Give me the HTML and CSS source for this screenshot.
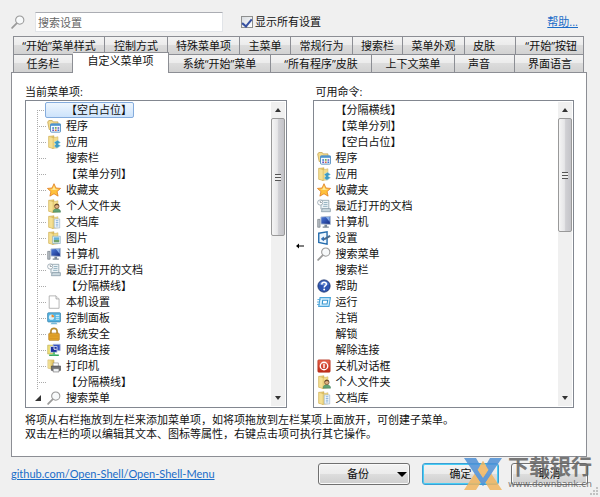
FILE: index.html
```html
<!DOCTYPE html>
<html lang="zh-CN">
<head>
<meta charset="utf-8">
<title>开始菜单设置</title>
<link rel="stylesheet" href="styles.css">
</head>
<body>
<svg class="sprite" aria-hidden="true">
  <defs>
    <linearGradient id="gold" x1="0" x2="1"><stop offset="0" stop-color="#f9eba6"/><stop offset="1" stop-color="#dcb850"/></linearGradient>
    <linearGradient id="red" x1="0" x2="0" y1="0" y2="1"><stop offset="0" stop-color="#e8664e"/><stop offset="1" stop-color="#c02a17"/></linearGradient>
    <linearGradient id="blue" x1="0" x2="1" y1="0" y2="1"><stop offset="0" stop-color="#4f7fe0"/><stop offset="1" stop-color="#12287f"/></linearGradient>
  </defs>
  <symbol id="folder" viewBox="0 0 16 16">
    <path d="M2 1.5 8 .8v14L2 14z" fill="url(#gold)" stroke="#cdb162" stroke-width=".6"/>
    <path d="M6 3.5 12.5 2v12.500L6 15.5z" fill="#f3dc88" stroke="#cdb162" stroke-width=".6"/>
    <path d="M2 1.5 7 3v12.500L2 14z" fill="#f5e093" stroke="#cfae58" stroke-width=".6"/>
  </symbol>
  <symbol id="programs" viewBox="0 0 16 16">
    <path d="M.8 3.5 2 1.8h4l1 1.5h5.5V12H2.5z" fill="#f5dd8e" stroke="#c2a252" stroke-width=".9"/>
    <rect x="4" y="5.5" width="11.5" height="9.5" rx="1" fill="#f6fbff" stroke="#4a86ba"/>
    <path d="M4 5.5h11.5v2.3H4z" fill="#4d94cf"/>
    <path d="M6 9.3h2v1.8H6zM12 12h2v1.8h-2z" fill="#3474cf"/><path d="M9 9.3h2v1.8H9z" fill="#58a646"/><path d="M12 9.3h2v1.8h-2zM6 12h2v1.8H6z" fill="#6655c2"/><path d="M9 12h2v1.8H9z" fill="#db6145"/>
  </symbol>
  <symbol id="apps" viewBox="0 0 16 16">
    <use href="#folder"/>
    <path d="M8 8.5 12 6l3.5 2.5-3 1.8 3 2-4.2 2.7L8 12.5l2.3-1.8z" fill="#3d9bc4" stroke="#bfe7f4" stroke-width=".5"/>
  </symbol>
  <symbol id="star" viewBox="0 0 16 16">
    <path d="M8 .8 10.2 5.7 15.5 6.2 11.5 9.8 12.7 15 8 12.3 3.3 15 4.5 9.8.5 6.2 5.8 5.7z" fill="#ffc13b" stroke="#df7b1e" stroke-width=".9" stroke-linejoin="round"/>
    <path d="M8 3 9.3 6.6 13 7 8 8 4 7 6.7 6.6z" fill="#ffe99a"/>
  </symbol>
  <symbol id="user" viewBox="0 0 16 16">
    <use href="#folder"/>
    <path d="M7 15c0-3 2-4 4-4s4.5 1 4.5 4z" fill="#62a376" stroke="#3d7b55" stroke-width=".6"/>
    <circle cx="11.2" cy="8.3" r="2.6" fill="#dfb182" stroke="#6b4b2c" stroke-width=".8"/>
    <path d="M8.7 8c0-3.5 5-3.5 5 0-1.5-1.5-3-1.5-5 0z" fill="#66482a"/>
  </symbol>
  <symbol id="docs" viewBox="0 0 16 16">
    <use href="#folder"/>
    <path d="M8.3 4.5h6.2v10.3H8.3z" fill="#f5faff" stroke="#8fabc4" stroke-width=".7"/>
    <path d="M10 6.5h3M10 8.5h3M10 10.5h3M10 12.5h3" stroke="#5e96cd" stroke-width=".8"/>
  </symbol>
  <symbol id="pics" viewBox="0 0 16 16">
    <use href="#folder"/>
    <path d="M6.5 6h8.7v8.3H6.5z" fill="#eff9ff" stroke="#7aa2b9" stroke-width=".7"/>
    <path d="M7.8 7.2h6.2v3H7.8z" fill="#62b0da"/><path d="M7.8 10.2h6.2V13H7.8z" fill="#70a36b"/>
  </symbol>
  <symbol id="computer" viewBox="0 0 16 16">
    <path d="M.8 5h2.7v9H.8z" fill="#b8bec5" stroke="#67717c" stroke-width=".7"/>
    <path d="M4.5 2.2 15.3 1.5v9.3l-10.8-.5z" fill="url(#blue)" stroke="#b4c1d3"/>
    <path d="M10 2.3h4.4v5.4z" fill="#85aeea"/>
    <path d="M8.5 11h3v2h2v1.5h-7V13h2z" fill="#7c8997"/>
  </symbol>
  <symbol id="recent" viewBox="0 0 16 16">
    <path d="M4.5 1.5h9v10h-9z" fill="#ecf3f7" stroke="#7d929f" stroke-width=".8"/>
    <path d="M6 11h9.3v3.5H5z" fill="#cad8df" stroke="#7d929f" stroke-width=".8"/>
    <path d="M8 4h4M7.5 6.2H12M7 8.4h5" stroke="#8aacba"/>
    <circle cx="3.7" cy="4" r="3" fill="#fff" stroke="#92a2ac" stroke-width=".9"/>
    <path d="M3.7 2v2h1.8" fill="none" stroke="#586975" stroke-width=".7"/>
  </symbol>
  <symbol id="page" viewBox="0 0 16 16">
    <path d="M2.5 1h7.8l3.5 3.5v10.7H2.5z" fill="#fff" stroke="#999" stroke-width=".8"/>
    <path d="M10.3 1v3.5h3.5" fill="#eee" stroke="#999" stroke-width=".8"/>
  </symbol>
  <symbol id="panel" viewBox="0 0 16 16">
    <rect x=".7" y="2" width="14.8" height="10.5" rx="1" fill="#55b4e1" stroke="#347da8" stroke-width=".8"/>
    <circle cx="5.2" cy="7" r="3" fill="#d8f0fa"/><path d="M5.2 7V4a3 3 0 0 1 3 3z" fill="#f08b30"/>
    <path d="M10 5h4M10 7.2h4M10 9.4h4" stroke="#e7fafe"/><path d="M5.5 13h5l1.5 2h-8z" fill="#77b9d8"/>
  </symbol>
  <symbol id="lock" viewBox="0 0 16 16">
    <path d="M4.5 8V4.5c0-4 7-4 7 0V8" fill="none" stroke="#b68a2d" stroke-width="1.9"/>
    <rect x="2" y="7" width="12" height="8.2" rx="1" fill="#e9aa2e" stroke="#ad7519" stroke-width=".8"/>
    <path d="M3 9.3h10M3 11.3h10M3 13.3h10" stroke="#c98a1c" stroke-width=".7"/>
  </symbol>
  <symbol id="network" viewBox="0 0 16 16">
    <path d="M.8 2.5h6v10h-6z" fill="#eee078" stroke="#b9aa4b" stroke-width=".7"/>
    <path d="M7 1.5h8v7.2H7z" fill="#3953c3" stroke="#a6b4d4"/><path d="M4 4h7.5v6.7H4z" fill="#1b2f9d" stroke="#cad5ea"/>
    <path d="M8 4.7v2.5h3" stroke="#fff" fill="none"/><path d="M8 10.5v2.3M2.5 14h11" stroke="#32a65a" stroke-width="1.8"/><path d="M5.5 14 8 11.5l2.5 2.5z" fill="#61c580"/>
  </symbol>
  <symbol id="printer" viewBox="0 0 16 16">
    <path d="M1 1h7v11L1 10.5z" fill="url(#gold)" stroke="#cdb162" stroke-width=".6"/>
    <path d="M7 4.5h6V9H7z" fill="#fff" stroke="#848484" stroke-width=".7"/>
    <path d="M5 8h10.5v5H5z" fill="#727274" stroke="#454548" stroke-width=".7"/>
    <path d="M7 11h6.7v3.8H7z" fill="#f3f5f7" stroke="#666" stroke-width=".7"/>
  </symbol>
  <symbol id="search" viewBox="0 0 16 16">
    <path d="M6.7 9.3 1.3 14.8" stroke="#9a9a9a" stroke-width="2" stroke-linecap="round"/>
    <circle cx="10" cy="5.8" r="4.7" fill="#f7f9fa" stroke="#999" stroke-width="1.2"/>
    <path d="M7.3 5.2c.4-1.5 1.4-2.2 2.7-2.3" stroke="#fff" fill="none"/>
  </symbol>
  <symbol id="settings" viewBox="0 0 16 16">
    <path d="M2 2.5 11.5 1v14L2 13z" fill="#edf7ff" stroke="#246cad" stroke-width="1.6"/>
    <path d="m5 9 2.500-2v4z" fill="#2466b1" stroke="#2466b1"/><path d="m8 9.500 7-4" stroke="#4b6b8c" stroke-width="2.200"/>
  </symbol>
  <symbol id="help" viewBox="0 0 16 16">
    <circle cx="8" cy="8" r="7" fill="#2d55b1" stroke="#1e3670"/>
    <path d="M2.5 6c1.5-4.5 9.5-4.5 11 0-3 1.7-8 1.7-11 0z" fill="#7398dd" opacity=".7"/>
    <path d="M5.5 6.2c0-3.5 5.2-3.2 5.2-.3 0 1.7-2.5 1.7-2.5 3.8" stroke="#fff" stroke-width="1.7" fill="none"/><circle cx="8.2" cy="12" r="1.1" fill="#fff"/>
  </symbol>
  <symbol id="run" viewBox="0 0 16 16">
    <path d="M3.5 3h11.8l-1.600 10H2z" fill="#d9f2ff" stroke="#4ca4d9" stroke-width="1.3"/>
    <path d="M6.5 6h5.7L11.5 10.3H6z" fill="#fff" stroke="#3695cf" stroke-width="1.2"/>
    <path d="M.5 5.2H4M0 8h3.5M0 10.8h3" stroke="#4ca4d9"/>
  </symbol>
  <symbol id="power" viewBox="0 0 16 16">
    <rect x="1" y="1" width="14" height="14" rx="1" fill="url(#red)" stroke="#b5311d" stroke-width=".8"/>
    <circle cx="8" cy="8" r="4.3" fill="none" stroke="#fff" stroke-width="1.5"/><path d="M8 5.5v5" stroke="#fff" stroke-width="1.6"/>
  </symbol>
</svg>

<div class="dialog">
  <header class="top">
    <svg class="icon search-icon" aria-hidden="true"><use href="#search"/></svg>
    <input class="search" type="text" placeholder="搜索设置" aria-label="搜索设置">
    <label class="show-all"><input type="checkbox" checked>显示所有设置</label>
    <a class="help" href="#">帮助...</a>
  </header>

  <div class="tabs" role="tablist">
    <div class="tab-row tab-row-back">
      <button class="tab" role="tab">“开始”菜单样式</button>
      <button class="tab" role="tab">控制方式</button>
      <button class="tab" role="tab">特殊菜单项</button>
      <button class="tab" role="tab">主菜单</button>
      <button class="tab" role="tab">常规行为</button>
      <button class="tab" role="tab">搜索栏</button>
      <button class="tab" role="tab">菜单外观</button>
      <button class="tab tab-start" role="tab">皮肤</button>
      <button class="tab tab-end" role="tab">“开始”按钮</button>
    </div>
    <div class="tab-row tab-row-front">
      <button class="tab" role="tab">任务栏</button>
      <button class="tab selected" role="tab" aria-selected="true">自定义菜单项</button>
      <button class="tab" role="tab">系统“开始”菜单</button>
      <button class="tab" role="tab">“所有程序”皮肤</button>
      <button class="tab" role="tab">上下文菜单</button>
      <button class="tab tab-start tab-wide" role="tab">声音</button>
      <button class="tab tab-end" role="tab">界面语言</button>
    </div>
  </div>

  <main class="panel">
    <div class="columns">
      <section class="column">
        <h2>当前菜单项:</h2>
        <div class="listbox">
          <ul class="items tree">
            <li><span class="icon"></span><span class="name chosen">【空白占位】</span></li>
            <li><svg class="icon"><use href="#programs"/></svg><span class="name">程序</span></li>
            <li><svg class="icon"><use href="#apps"/></svg><span class="name">应用</span></li>
            <li><span class="icon"></span><span class="name">搜索栏</span></li>
            <li><span class="icon"></span><span class="name">【菜单分列】</span></li>
            <li><svg class="icon"><use href="#star"/></svg><span class="name">收藏夹</span></li>
            <li><svg class="icon"><use href="#user"/></svg><span class="name">个人文件夹</span></li>
            <li><svg class="icon"><use href="#docs"/></svg><span class="name">文档库</span></li>
            <li><svg class="icon"><use href="#pics"/></svg><span class="name">图片</span></li>
            <li><svg class="icon"><use href="#computer"/></svg><span class="name">计算机</span></li>
            <li><svg class="icon"><use href="#recent"/></svg><span class="name">最近打开的文档</span></li>
            <li><span class="icon"></span><span class="name">【分隔横线】</span></li>
            <li><svg class="icon"><use href="#page"/></svg><span class="name">本机设置</span></li>
            <li><svg class="icon"><use href="#panel"/></svg><span class="name">控制面板</span></li>
            <li><svg class="icon"><use href="#lock"/></svg><span class="name">系统安全</span></li>
            <li><svg class="icon"><use href="#network"/></svg><span class="name">网络连接</span></li>
            <li><svg class="icon"><use href="#printer"/></svg><span class="name">打印机</span></li>
            <li><span class="icon"></span><span class="name">【分隔横线】</span></li>
            <li class="parent"><svg class="icon"><use href="#search"/></svg><span class="name">搜索菜单</span></li>
          </ul>
          <div class="scrollbar" aria-hidden="true">
            <svg class="arrow" viewBox="0 0 14 16"><path d="M4 10 7 6l3 4z"/></svg>
            <div class="thumb"><i></i></div>
            <svg class="arrow" viewBox="0 0 14 16"><path d="M4 6h6l-3 4z"/></svg>
          </div>
        </div>
      </section>
      <svg class="move" viewBox="0 0 8 8" role="img" aria-label="添加"><path d="M0 4 3 1.5V3.5h5v1H3v2z"/></svg>
      <section class="column commands">
        <h2>可用命令:</h2>
        <div class="listbox">
          <ul class="items">
            <li><span class="icon"></span><span class="name">【分隔横线】</span></li>
            <li><span class="icon"></span><span class="name">【菜单分列】</span></li>
            <li><span class="icon"></span><span class="name">【空白占位】</span></li>
            <li><svg class="icon"><use href="#programs"/></svg><span class="name">程序</span></li>
            <li><svg class="icon"><use href="#apps"/></svg><span class="name">应用</span></li>
            <li><svg class="icon"><use href="#star"/></svg><span class="name">收藏夹</span></li>
            <li><svg class="icon"><use href="#recent"/></svg><span class="name">最近打开的文档</span></li>
            <li><svg class="icon"><use href="#computer"/></svg><span class="name">计算机</span></li>
            <li><svg class="icon"><use href="#settings"/></svg><span class="name">设置</span></li>
            <li><svg class="icon"><use href="#search"/></svg><span class="name">搜索菜单</span></li>
            <li><span class="icon"></span><span class="name">搜索栏</span></li>
            <li><svg class="icon"><use href="#help"/></svg><span class="name">帮助</span></li>
            <li><svg class="icon"><use href="#run"/></svg><span class="name">运行</span></li>
            <li><span class="icon"></span><span class="name">注销</span></li>
            <li><span class="icon"></span><span class="name">解锁</span></li>
            <li><span class="icon"></span><span class="name">解除连接</span></li>
            <li><svg class="icon"><use href="#power"/></svg><span class="name">关机对话框</span></li>
            <li><svg class="icon"><use href="#user"/></svg><span class="name">个人文件夹</span></li>
            <li><svg class="icon"><use href="#docs"/></svg><span class="name">文档库</span></li>
          </ul>
          <div class="scrollbar" aria-hidden="true">
            <svg class="arrow" viewBox="0 0 14 16"><path d="M4 10 7 6l3 4z"/></svg>
            <div class="thumb thumb-short"><i></i></div>
            <svg class="arrow" viewBox="0 0 14 16"><path d="M4 6h6l-3 4z"/></svg>
          </div>
        </div>
      </section>
    </div>
    <p class="hint">将项从右栏拖放到左栏来添加菜单项，如将项拖放到左栏某项上面放开，可创建子菜单。<br>双击左栏的项以编辑其文本、图标等属性，右键点击项可执行其它操作。</p>
  </main>

  <footer class="bottom">
    <a class="repo" href="#">github.com/Open-Shell/Open-Shell-Menu</a>
    <button class="button backup"><span>备份</span><svg viewBox="0 0 10 5" aria-hidden="true"><path d="M0 0h10L5 5z"/></svg></button>
    <button class="button primary">确定</button>
    <button class="button">取消</button>
  </footer>

  <svg class="grip" viewBox="0 0 8 8" aria-hidden="true"><path d="M6 0h2v2H6zM3 3h2v2H3zM6 3h2v2H6zM0 6h2v2H0zM3 6h2v2H3zM6 6h2v2H6z"/></svg>

  <div class="watermark">
    <svg viewBox="0 0 38 32" aria-hidden="true">
      <path d="M19 3 38 32H26l-7-11-7 11H0z" fill="#f2b65f"/>
      <path d="M0 0h12l7 12 7-12h12L19 28z" fill="#4e90d6"/>
      <path d="m19 3 5.500 9L19 20l-5.500-8z" fill="#f2b65f"/>
      <path d="m13.500 12 5.500 9 5.500-9 3 3L19 28l-8.500-13z" fill="#4e90d6"/>
    </svg>
    <div class="mark-text"><strong>下载银行</strong><span>www.downbank.cn</span></div>
  </div>
</div>
</body>
</html>
```
FILE: styles.css
```css
* {
  box-sizing: border-box;
}

body {
  margin: 0;
  background: #f0f0f0;
  color: #111;
  font-family: "Open Sans", "Noto Sans CJK SC", sans-serif;
  font-size: 11px;
  line-height: 16px;
}

button,
input {
  font: inherit;
  color: inherit;
}

a {
  color: #1a6cc8;
}

.sprite {
  position: absolute;
  width: 0;
  height: 0;
}

.dialog {
  position: relative;
  display: flex;
  flex-direction: column;
  min-height: 100vh;
  padding: 12px 12px 10px 11px;
}

.icon {
  flex: none;
  width: 14px;
  height: 14px;
}

/* Search bar */
.top {
  display: flex;
  align-items: center;
  height: 20px;
  margin-bottom: 4px;
}

.search {
  width: 188px;
  height: 20px;
  margin-left: 10px;
  padding: 0 2px;
  border: 1px solid #e1e4e8;
  border-top-color: #abadb3;
  background: #fff;
}

.search::placeholder {
  color: #666;
  opacity: 1;
}

.show-all {
  display: flex;
  align-items: center;
  gap: 2px;
  margin-left: 18px;
}

.show-all input {
  appearance: none;
  display: grid;
  place-items: center;
  width: 12px;
  height: 12px;
  margin: 0;
  border: 1px solid #8e8f8f;
  background: linear-gradient(135deg, #d8dce0, #fff);
}

.show-all input:checked::after {
  content: "";
  width: 4px;
  height: 8px;
  border: solid #3650a0;
  border-width: 0 2px 2px 0;
  transform: rotate(40deg);
}

.help {
  margin: 0 10px 0 auto;
}

/* Tabs */
.tabs {
  margin: 0 4px 0 2px;
}

.tab-row {
  display: grid;
}

.tab-row-back {
  grid-template-columns: 92fr 63fr 72fr 51fr 62fr 50fr 62fr 51fr 68fr;
}

.tab-row-front {
  grid-template-columns: 60fr 96fr 102fr 101fr 83fr 60fr 69fr;
}

.tab {
  height: 18px;
  min-width: 0;
  padding: 0;
  border: 1px solid #8c8e94;
  border-width: 1px 1px 0 0;
  background: linear-gradient(#f3f3f3, #ebebeb 50%, #dcdcdc 50%, #d2d2d2);
  line-height: 16px;
  white-space: nowrap;
}

.tab:first-child {
  border-left-width: 1px;
}

.tab-start {
  padding-left: 8px;
  text-align: left;
}

.tab-wide {
  padding-left: 13px;
}

.tab-end {
  padding-right: 6px;
  text-align: right;
}

.tab-row-front .tab-end {
  padding-right: 11px;
}

.tab.selected {
  z-index: 1;
  height: 21px;
  margin: -2px 0 -1px;
  padding-bottom: 4px;
  background: #fff;
}

/* Page */
.panel {
  margin-right: 1px;
  padding: 11px 12px 15px 13px;
  border: 1px solid #8c8e94;
  background: #fff;
}

.columns {
  display: flex;
  align-items: center;
}

.column {
  flex: 1;
  min-width: 0;
}

.column h2 {
  margin: 0;
  font-size: 11px;
  font-weight: 400;
  line-height: 16px;
}

.commands h2 {
  padding-left: 3px;
}

.listbox {
  display: flex;
  padding: 1px;
  border: 1px solid #828790;
}

.items {
  flex: 1;
  min-width: 0;
  margin: 0;
  padding: 0 0 0 2px;
  list-style: none;
}

.items li {
  display: flex;
  align-items: center;
  height: 16px;
}

.name {
  padding: 0 5px;
  line-height: 16px;
  white-space: nowrap;
}

.tree {
  padding-left: 10px;
}

.tree li::before {
  content: "";
  flex: none;
  align-self: stretch;
  width: 10px;
  background:
    repeating-linear-gradient(#aaa 0 1px, #fff 1px 2px) 0 0 / 1px 100% no-repeat,
    repeating-linear-gradient(90deg, #aaa 0 1px, #fff 1px 2px) 0 8px / 100% 1px no-repeat;
}

.tree li:first-child::before {
  height: 8px;
  align-self: end;
  background-position: 0 0, 0 0;
}

.tree .parent::before {
  height: 6px;
  width: 6px;
  margin: 0 6px 0 -2px;
  align-self: center;
  background: #333;
  clip-path: polygon(100% 0, 100% 100%, 0 100%);
}

.tree .chosen {
  margin-left: -16px;
  padding: 0 1px 0 20px;
  border: 1px solid #84acdd;
  border-radius: 2px;
  background: linear-gradient(#eef6fe, #cde3fb);
  line-height: 14px;
}

.move {
  flex: none;
  width: 8px;
  height: 8px;
  margin: 0 9px;
}

/* Scrollbars */
.scrollbar {
  display: flex;
  flex-direction: column;
  width: 14px;
  background: #f0f0f0;
}

.arrow {
  width: 14px;
  height: 16px;
  fill: #333;
}

.thumb {
  display: grid;
  place-items: center;
  height: 118px;
  margin-bottom: auto;
  border: 1px solid #999;
  border-radius: 2px;
  background: linear-gradient(90deg, #f5f5f5, #e6e6e8 45%, #d0d0d4 55%, #c4c4c9);
}

.thumb-short {
  height: 114px;
}

.thumb i {
  width: 6px;
  height: 7px;
  background: repeating-linear-gradient(#555 0 1px, #eee 1px 3px);
}

.hint {
  margin: 5px 0 0;
  line-height: 14px;
}

/* Footer */
.bottom {
  display: flex;
  align-items: center;
  gap: 12px;
  margin-top: 6px;
}

.repo {
  margin-right: auto;
  font-family: Lato, "Noto Sans CJK SC", sans-serif;
}

.button {
  width: 77px;
  height: 22px;
  padding: 0;
  border: 1px solid #707070;
  border-radius: 3px;
  background: linear-gradient(#f3f3f3, #ebebeb 50%, #dddddd 50%, #cfcfcf);
  box-shadow: inset 0 0 0 1px #fafafa;
}

.backup {
  display: flex;
  align-items: center;
  width: 92px;
  padding-right: 2px;
}

.backup span {
  flex: 1;
}

.backup svg {
  width: 10px;
  height: 5px;
}

.primary {
  border-color: #3c9fd4;
  box-shadow: inset 0 0 0 1px #48cdf4;
}

.grip {
  position: absolute;
  right: 2px;
  bottom: 2px;
  width: 8px;
  height: 8px;
  fill: #c2c2c2;
}

.watermark {
  position: absolute;
  right: 8px;
  bottom: 6px;
  display: flex;
  align-items: center;
  gap: 6px;
  opacity: 0.85;
  color: #626262;
  pointer-events: none;
}

.watermark > svg {
  width: 38px;
  height: 32px;
}

.mark-text {
  display: flex;
  flex-direction: column;
}

.mark-text strong {
  font-size: 21px;
  font-weight: 700;
  line-height: 21px;
}

.mark-text span {
  font-family: "DejaVu Sans", sans-serif;
  font-size: 9px;
  line-height: 14px;
}
```
